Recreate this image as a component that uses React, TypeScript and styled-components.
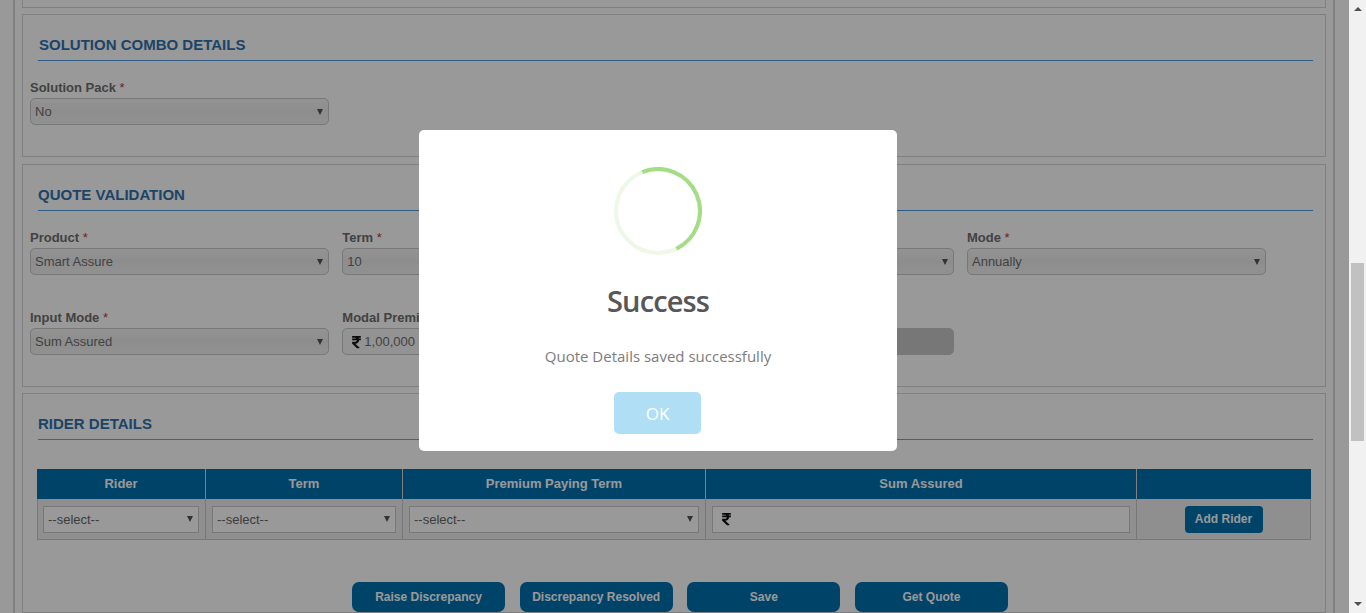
import React from "react";
import styled, { createGlobalStyle } from "styled-components";
import { FaRupeeSign } from "react-icons/fa";

const GlobalStyle = createGlobalStyle`
  html, body {
    margin: 0;
    height: 100%;
    overflow: hidden;
    background: #fff;
  }
  * {
    box-sizing: border-box;
  }
`;

const App = () => {
  return (
    <StPage>
      <GlobalStyle />
      <StMain>
        <StFrame>
          <StPanelStub />

          <StPanel $height={143}>
            <StHeading $indent={1}>SOLUTION COMBO DETAILS</StHeading>
            <StFields>
              <Field label="Solution Pack" value="No" />
            </StFields>
          </StPanel>

          <StPanel $height={223} $gap={6}>
            <StHeading>QUOTE VALIDATION</StHeading>
            <StFields>
              <Field label="Product" value="Smart Assure" />
              <Field label="Term" value="10" />
              <Field label="" value="" />
              <Field label="Mode" value="Annually" />
              <Field label="Input Mode" value="Sum Assured" />
              <StField>
                <StLabel>Modal Premium</StLabel>
                <StInput>
                  <StRupee />
                  1,00,000
                </StInput>
              </StField>
              <StField>
                <StLabel />
                <StInput $disabled />
              </StField>
            </StFields>
          </StPanel>

          <StPanel>
            <StHeading $muted>RIDER DETAILS</StHeading>
            <StTable>
              <thead>
                <tr>
                  <StTh $width={169}>Rider</StTh>
                  <StTh $width={197}>Term</StTh>
                  <StTh $width={303}>Premium Paying Term</StTh>
                  <StTh $width={431}>Sum Assured</StTh>
                  <StTh $width={174} />
                </tr>
              </thead>
              <tbody>
                <tr>
                  <StTd>
                    <StCellSelect>
                      --select--
                      <StArrow />
                    </StCellSelect>
                  </StTd>
                  <StTd>
                    <StCellSelect>
                      --select--
                      <StArrow />
                    </StCellSelect>
                  </StTd>
                  <StTd>
                    <StCellSelect>
                      --select--
                      <StArrow />
                    </StCellSelect>
                  </StTd>
                  <StTd>
                    <StCellSelect>
                      <StRupee />
                    </StCellSelect>
                  </StTd>
                  <StTd>
                    <StAddRider>Add Rider</StAddRider>
                  </StTd>
                </tr>
              </tbody>
            </StTable>
            <StActions>
              <StActionButton>Raise Discrepancy</StActionButton>
              <StActionButton>Discrepancy Resolved</StActionButton>
              <StActionButton>Save</StActionButton>
              <StActionButton>Get Quote</StActionButton>
            </StActions>
          </StPanel>
        </StFrame>
      </StMain>

      <StScrollbar>
        <StScrollUp />
        <StThumb />
        <StScrollDown />
      </StScrollbar>

      <StOverlay>
        <StModal>
          <svg width="88" height="88" viewBox="0 0 88 88">
            <circle cx="44" cy="44" r="42" fill="none" stroke="#edf8e7" strokeWidth="4" />
            <path
              d="M28.27 5.06A42 42 0 0 1 62.41 81.75"
              fill="none"
              stroke="#a5dc86"
              strokeWidth="4"
            />
          </svg>
          <StTitle>Success</StTitle>
          <StMessage>Quote Details saved successfully</StMessage>
          <StOkButton>OK</StOkButton>
        </StModal>
      </StOverlay>
    </StPage>
  );
};

const Field = ({ label, value }: { label: string; value: string }) => (
  <StField>
    <StLabel>
      {label}
      {label && <StRequired> *</StRequired>}
    </StLabel>
    <StSelect>
      {value}
      <StArrow />
    </StSelect>
  </StField>
);

export default App;

const StPage = styled.div`
  display: flex;
  height: 613px;
  overflow: hidden;
  font-family: "Liberation Sans", Arial, sans-serif;
`;

const StMain = styled.main`
  flex: 1;
  min-width: 0;
  padding: 0 14px 0 13px;
`;

const StFrame = styled.div`
  height: 100%;
  padding: 0 7px;
  border-left: 2px solid #d5d5d5;
  border-right: 2px solid #d5d5d5;
  overflow: hidden;
`;

const StPanelStub = styled.div`
  height: 8px;
  margin-bottom: 6px;
  border: 1px solid #d5d5d5;
  border-top: none;
`;

const StPanel = styled.section<{ $height?: number; $gap?: number }>`
  height: ${({ $height }) => ($height ? `${$height}px` : "auto")};
  margin-bottom: ${({ $gap }) => $gap ?? 7}px;
  border: 1px solid #d5d5d5;
`;

const StHeading = styled.h2<{ $indent?: number; $muted?: boolean }>`
  height: 46px;
  margin: 0 12px 0 15px;
  padding: 0 0 7px ${({ $indent }) => $indent ?? 0}px;
  display: flex;
  align-items: flex-end;
  font-size: 15px;
  line-height: 17px;
  font-weight: 700;
  color: #2f72ad;
  border-bottom: 1px solid ${({ $muted }) => ($muted ? "#7f9fc4" : "#4f9ce6")};
`;

const StFields = styled.div`
  display: grid;
  grid-template-columns: repeat(4, 299px);
  column-gap: 13.33px;
  row-gap: 35px;
  padding: 19px 0 0 7px;
`;

const StField = styled.div`
  display: flex;
  flex-direction: column;
  gap: 2px;
`;

const StLabel = styled.label`
  min-height: 16px;
  font-size: 13px;
  line-height: 16px;
  font-weight: 700;
  color: #6e6e6e;
`;

const StRequired = styled.span`
  font-weight: 400;
  color: #b83a3a;
`;

const StSelect = styled.div`
  height: 27px;
  padding: 0 4px;
  display: flex;
  align-items: center;
  font-size: 13px;
  color: #6e6e6e;
  border: 1px solid #c8c8c8;
  border-radius: 5px;
  background: linear-gradient(#f5f5f5, #ececec 50%, #f2f2f2);
`;

const StInput = styled.div<{ $disabled?: boolean }>`
  height: 27px;
  padding: 0 9px;
  display: flex;
  align-items: center;
  gap: 3px;
  font-size: 13px;
  color: #6e6e6e;
  border: 1px solid #c8c8c8;
  border-radius: 5px;
  background: ${({ $disabled }) => ($disabled ? "#c6c6c6" : "#f6f6f6")};
`;

const StRupee = styled(FaRupeeSign)`
  flex: none;
  width: 9px;
  height: 14px;
  color: #111;
`;

const StArrow = styled.span`
  width: 0;
  height: 0;
  margin: 0 1px 0 auto;
  border-left: 3px solid transparent;
  border-right: 3px solid transparent;
  border-top: 6px solid #555;
`;

const StTable = styled.table`
  width: 1274px;
  margin: 29px 0 0 14px;
  table-layout: fixed;
  border-spacing: 0;
`;

const StTh = styled.th<{ $width: number }>`
  width: ${({ $width }) => $width}px;
  height: 30px;
  padding: 0 0 2px;
  font-size: 13px;
  font-weight: 700;
  color: #fff;
  background: #0070b0;
  border-right: 1px solid #d5d5d5;

  &:last-child {
    border-right: none;
  }
`;

const StTd = styled.td`
  height: 41px;
  padding: 0 6px;
  text-align: center;
  background: #eeeeee;
  border-right: 1px solid #c8c8c8;
  border-bottom: 1px solid #c8c8c8;

  &:first-child {
    padding-left: 5px;
    border-left: 1px solid #c8c8c8;
  }
`;

const StCellSelect = styled.div`
  height: 27px;
  padding: 0 4px 0 9px;
  display: flex;
  align-items: center;
  font-size: 13px;
  color: #666;
  background: #fff;
  border: 1px solid #c8c8c8;

  &:has(span) {
    padding-left: 4px;
  }
`;

const StAddRider = styled.button`
  width: 78px;
  height: 27px;
  padding: 0;
  font-family: inherit;
  font-size: 12px;
  font-weight: 700;
  color: #fff;
  background: #0070b0;
  border: none;
  border-radius: 4px;
`;

const StActions = styled.div`
  display: flex;
  gap: 14.67px;
  margin-top: 42px;
  padding-left: 329px;
`;

const StActionButton = styled.button`
  width: 153px;
  height: 30px;
  padding: 0;
  font-family: inherit;
  font-size: 12px;
  font-weight: 700;
  color: #fff;
  background: #0070b0;
  border: none;
  border-radius: 7px;
`;

const StScrollbar = styled.aside`
  position: relative;
  flex: 0 0 17px;
  background: #f1f1f1;
`;

const StThumb = styled.div`
  position: absolute;
  top: 263px;
  left: 2px;
  width: 13px;
  height: 178px;
  background: #c1c1c1;
`;

const StScrollUp = styled.span`
  position: absolute;
  top: 7px;
  left: 5px;
  border-left: 4px solid transparent;
  border-right: 4px solid transparent;
  border-bottom: 4px solid #505050;
`;

const StScrollDown = styled.span`
  position: absolute;
  bottom: 7px;
  left: 5px;
  border-left: 4px solid transparent;
  border-right: 4px solid transparent;
  border-top: 4px solid #505050;
`;

const StOverlay = styled.div`
  position: fixed;
  top: 0;
  left: 0;
  right: 17px;
  bottom: 0;
  padding: 0 33px 32px 0;
  display: flex;
  align-items: center;
  justify-content: center;
  background: rgba(0, 0, 0, 0.4);
`;

const StModal = styled.div`
  width: 478px;
  height: 321px;
  padding-top: 37px;
  display: flex;
  flex-direction: column;
  align-items: center;
  font-family: "Open Sans", "Noto Sans", sans-serif;
  background: #fff;
  border-radius: 5px;
`;

const StTitle = styled.h1`
  margin: 26px 0 0;
  font-size: 29px;
  line-height: 40px;
  font-weight: 600;
  letter-spacing: -0.9px;
  color: #575757;
`;

const StMessage = styled.p`
  margin: 24px 0 0;
  font-size: 15px;
  line-height: 22px;
  color: #7c7c7c;
`;

const StOkButton = styled.button`
  width: 87px;
  height: 42px;
  margin: 25px 1px 0 0;
  padding: 0;
  font-family: inherit;
  font-size: 17px;
  color: #fff;
  background: #b0dff5;
  border: none;
  border-radius: 5px;
`;
